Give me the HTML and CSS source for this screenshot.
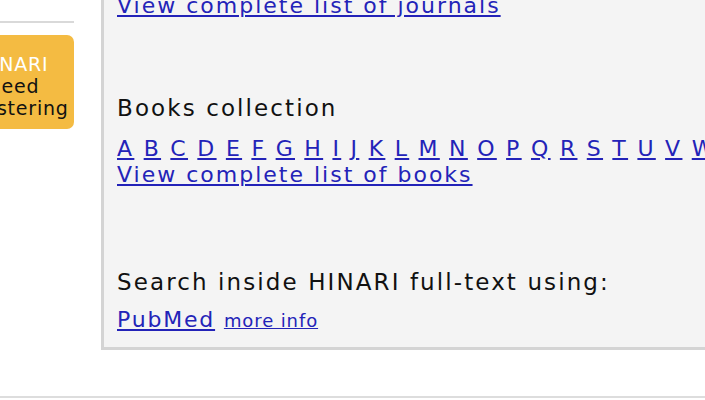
FILE: index.html
```html
<!DOCTYPE html>
<html>
<head>
<meta charset="utf-8">
<link rel="stylesheet" href="styles.css">
</head>
<body>
<div class="page">
  <aside class="sidebar">
    <div class="rule"></div>
    <div class="promo">
      <span class="promo-title">HINARI</span>
      <span>Need</span>
      <span>registering</span>
    </div>
  </aside>
  <main class="panel">
    <a class="link" href="#">View complete list of journals</a>
    <h2 class="heading books">Books collection</h2>
    <div class="letters">
      <a href="#">A</a> <a href="#">B</a> <a href="#">C</a> <a href="#">D</a> <a href="#">E</a> <a href="#">F</a> <a href="#">G</a> <a href="#">H</a> <a href="#">I</a> <a href="#">J</a> <a href="#">K</a> <a href="#">L</a> <a href="#">M</a> <a href="#">N</a> <a href="#">O</a> <a href="#">P</a> <a href="#">Q</a> <a href="#">R</a> <a href="#">S</a> <a href="#">T</a> <a href="#">U</a> <a href="#">V</a> <a href="#">W</a> <a href="#">X</a> <a href="#">Y</a> <a href="#">Z</a>
    </div>
    <a class="link" href="#">View complete list of books</a>
    <h2 class="heading search">Search inside HINARI full-text using:</h2>
    <div class="pubmed"><a href="#">PubMed</a> <a class="small" href="#">more info</a></div>
  </main>
</div>
<footer class="footer"></footer>
</body>
</html>
```
FILE: styles.css
```css
html, body {
  margin: 0;
  padding: 0;
  background: #ffffff;
  overflow: hidden;
}
body {
  width: 705px;
  height: 400px;
  font-family: "DejaVu Sans", Verdana, sans-serif;
  font-size: 22px;
  line-height: 26px;
  color: #111;
}
a {
  color: #2323b8;
  text-decoration: underline;
}
.page {
  display: flex;
  margin-top: -7px;
  margin-left: -60px;
  width: 900px;
}
.sidebar {
  width: 161px;
  flex: none;
  display: flex;
  flex-direction: column;
  padding-top: 28px;
}
.rule {
  height: 2px;
  width: 134px;
  background: #d9d9d9;
}
.promo {
  margin-top: 12px;
  width: 134px;
  height: 94px;
  box-sizing: border-box;
  background: #f4bb42;
  border-radius: 7px;
  display: flex;
  flex-direction: column;
  align-items: center;
  padding-top: 18px;
  padding-left: 12px;
  font-size: 19px;
  line-height: 22px;
  letter-spacing: 0.8px;
  color: #111;
}
.promo-title {
  color: #ffffff;
}
.panel {
  flex: 1;
  background: #f4f4f4;
  border-left: 3px solid #d4d4d4;
  border-bottom: 3px solid #d4d4d4;
  padding-left: 13px;
  padding-bottom: 13px;
  white-space: nowrap;
  display: flex;
  flex-direction: column;
  align-items: flex-start;
  letter-spacing: 2px;
}
.heading {
  font-size: 23px;
  font-weight: normal;
  line-height: 26px;
  letter-spacing: 2.1px;
  margin: 0;
}
.books {
  margin-top: 76px;
}
.letters {
  margin-top: 15px;
  letter-spacing: 2.3px;
}
.search {
  margin-top: 81px;
}
.pubmed {
  margin-top: 12px;
  letter-spacing: 1.8px;
}
.small {
  font-size: 18px;
  letter-spacing: 0.9px;
}
.footer {
  margin-top: 46px;
  height: 2px;
  background: #dddddd;
}
```
